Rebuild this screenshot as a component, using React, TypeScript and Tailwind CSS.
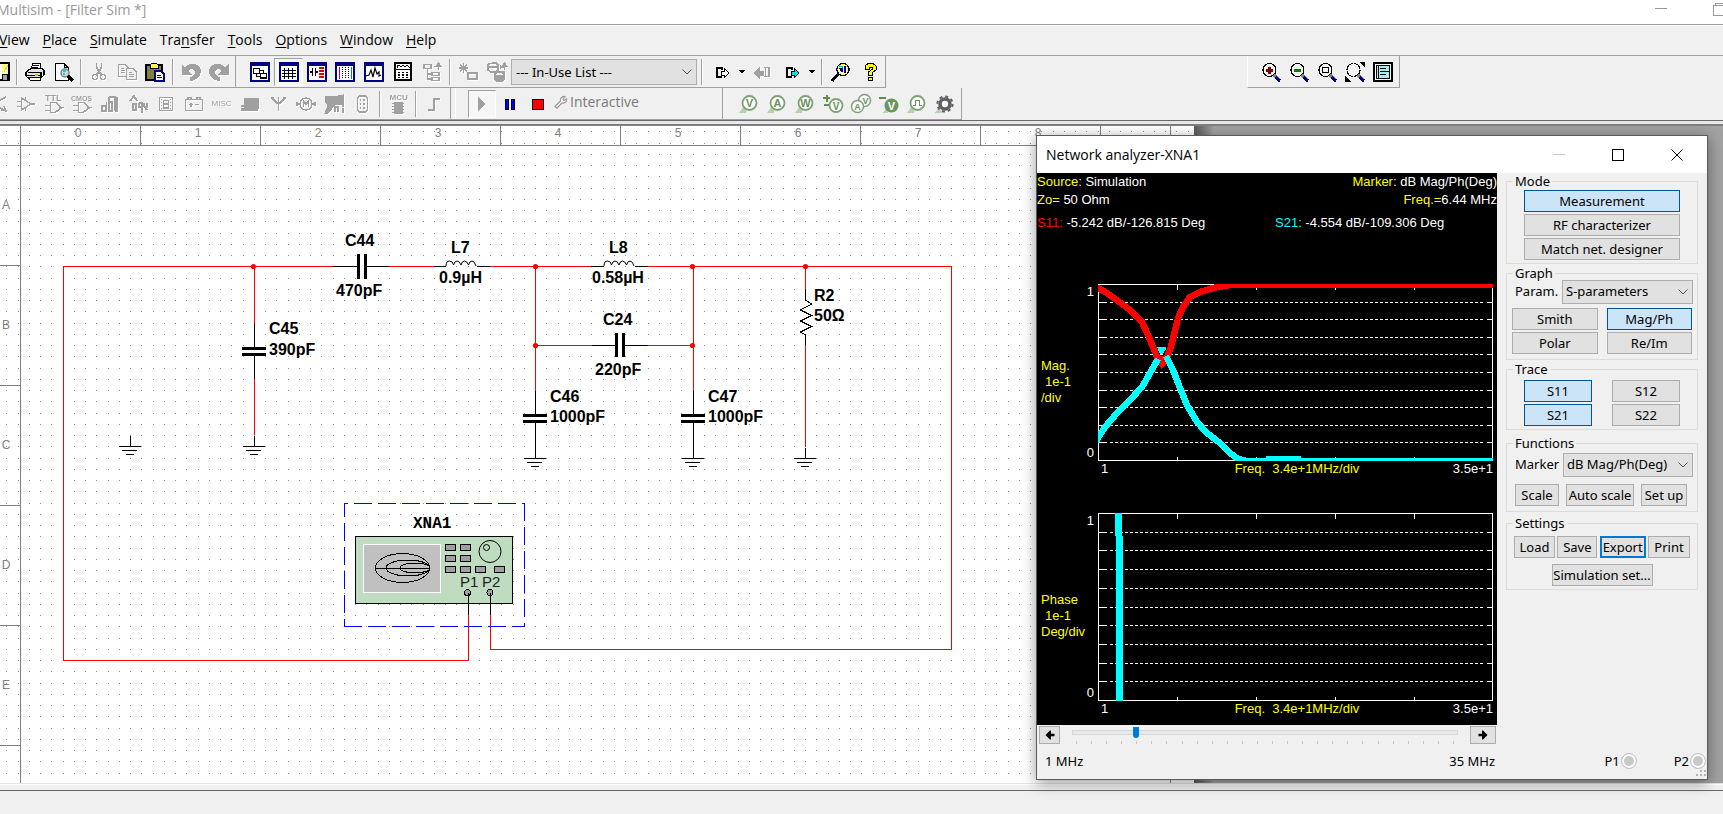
import type { ReactNode } from "react";

const G = "#a0a0a0";
const NAVY = "#000080";

/* ---------- toolbar primitives ---------- */

function Tool({
  label,
  wide,
  dim,
  pressed,
  children,
}: {
  label: string;
  wide?: boolean;
  dim?: boolean;
  pressed?: boolean;
  children: ReactNode;
}) {
  return (
    <button
      type="button"
      aria-label={label}
      className={
        "flex h-7 shrink-0 items-center justify-center border " +
        (wide ? "w-[29px] " : "w-7 ") +
        (pressed ? "border-t-[#a0a0a0] border-l-[#a0a0a0] border-r-white border-b-white bg-[#f7f7f7]" : "border-transparent")
      }
    >
      <svg
        viewBox="0 0 20 20"
        className={"h-5 w-5 shrink-0 overflow-visible " + (dim ? "drop-shadow-[1px_1px_0_#fff]" : "")}
        shapeRendering="crispEdges"
        fill="none"
        stroke={dim ? G : "#000"}
        strokeWidth="1"
        fontFamily="Liberation Sans, sans-serif"
      >
        {children}
      </svg>
    </button>
  );
}

function Sep() {
  return <span className="mx-[3px] h-[26px] w-[2px] shrink-0 border-r border-r-white bg-[#a0a0a0]" />;
}

function Caret({ label }: { label: string }) {
  return (
    <button type="button" aria-label={label} className="flex h-7 w-3 shrink-0 items-center justify-center">
      <svg viewBox="0 0 6 4" className="h-1 w-1.5" shapeRendering="crispEdges">
        <path d="M0 0H6L3 3.5Z" fill="#000" />
      </svg>
    </button>
  );
}

/* ---------- standard toolbar ---------- */

function StandardTools() {
  return (
    <div className="flex shrink-0 items-center border-r border-[#a0a0a0] pr-0.5">
      <div className="-ml-[15px] flex items-center">
        <Tool label="Save">
          <path d="M2 1H20V18H3Z" fill="#fff" stroke="#000" strokeWidth="2" />
          <path d="M13 2H19V11H13Z" fill="#ffff80" stroke="none" />
          <path d="M15 10L19 3" stroke="#c8c8a0" />
          <path d="M13 12H18V18H13Z" fill="#a0a0a0" />
        </Tool>
      </div>
      <Sep />
      <Tool label="Print">
        <path d="M6 7L8 1H16L15 7Z" fill="#fff" />
        <path d="M8 3.5H14M7 5.5H13" />
        <path d="M3 8.5L6 6.5H17L19 8.5V13L16 16H3L1 14V10Z" fill="#e4e4e4" strokeWidth="1.3" />
        <path d="M3 10.5H15M2 13.5H16M16 10V16" strokeWidth="1.3" />
        <path d="M4 15H15V18H5Z" fill="#fff" />
        <path d="M10 12.5H13" stroke="#cccc00" strokeWidth="2" />
      </Tool>
      <Tool label="Print preview">
        <path d="M2 1.5H11L15 5.5V18.5H2Z" fill="#fff" />
        <path d="M11 1.5V5.5H15" />
        <circle cx="12" cy="11" r="4" fill="#c8d8dc" stroke="#808080" strokeWidth="1.5" shapeRendering="auto" />
        <path d="M10 9H13M10 12H12" stroke="#00d8d8" strokeWidth="1.5" />
        <path d="M15 14L20 19" strokeWidth="3" />
      </Tool>
      <Sep />
      <Tool label="Cut" dim>
        <path d="M7.5 1V5L10 10L13 13M12.5 1V5L10 10L7 13" strokeWidth="1.5" />
        <circle cx="6" cy="15" r="2.5" strokeWidth="1.5" />
        <circle cx="14" cy="15" r="2.5" strokeWidth="1.5" />
      </Tool>
      <Tool label="Copy" dim>
        <path d="M1.5 2.5H8L11.5 6V14.5H1.5Z M3.5 6.5H7M3.5 8.5H8M3.5 10.5H8" strokeWidth="1.3" />
        <path d="M9.5 6.5H16L19.5 10V17.5H9.5Z M11.5 10.5H15M11.5 12.5H17M11.5 14.5H17" fill="#f0f0f0" strokeWidth="1.3" />
      </Tool>
      <Tool label="Paste">
        <path d="M1 3H17V18H1Z" fill="#808040" strokeWidth="1.5" />
        <path d="M5 3L7 1H11L13 3V6H5Z" fill="#ffff40" />
        <path d="M10 9H16L19 12V19H10Z" fill="#fff" stroke={NAVY} strokeWidth="1.5" />
        <path d="M12 13.5H16M12 15.5H17" stroke={NAVY} />
      </Tool>
      <Sep />
      <Tool label="Undo" dim>
        <path d="M1 3V12H10L7 9C9 5 14 6 14.5 10C14.5 13 12 15 9 16L10 18.5C15 18 19.5 14 19.5 9C19 2 9 0 4 6Z" fill={G} />
      </Tool>
      <Tool label="Redo" dim>
        <path d="M19 3V12H10L13 9C11 5 6 6 5.5 10C5.5 13 8 15 11 16L10 18.5C5 18 0.5 14 0.5 9C1 2 11 0 16 6Z" fill={G} />
      </Tool>
    </div>
  );
}

function PanelFrame({ children }: { children?: ReactNode }) {
  return (
    <>
      <path d="M1 1H19V19H1Z" fill="#fff" stroke={NAVY} strokeWidth="2" />
      <path d="M1 2.5H19" stroke={NAVY} strokeWidth="3" />
      {children}
    </>
  );
}

function ViewTools() {
  return (
    <div className="flex shrink-0 items-center border-r border-[#a0a0a0] pl-[9px] pr-px">
      <Tool label="Design toolbox" wide>
        <PanelFrame>
          <path d="M3.5 6.5H9.5V11.5H3.5ZM10.5 11.5H16.5V16H10.5ZM9.5 8.5H13.5V11.5M6.5 11.5V14.5H10.5" strokeWidth="1.4" />
        </PanelFrame>
      </Tool>
      <Tool label="Spreadsheet view" wide pressed>
        <PanelFrame>
          <path d="M3 8.5H17M3 11.5H17M3 14.5H17M5.5 6V17M9.5 6V17M13.5 6V17" strokeWidth="1.4" />
        </PanelFrame>
      </Tool>
      <Tool label="SPICE netlist viewer">
        <PanelFrame>
          <path d="M2.5 10H5.5M5.5 6V14M8.5 6V14M8.5 10H11" strokeWidth="1.4" />
          <path d="M12 5.5H17M12 8.5H17M12 11.5H17M12 14.5H17" stroke="#e00000" strokeWidth="2" />
        </PanelFrame>
      </Tool>
      <Tool label="Breadboard">
        <PanelFrame>
          <path d="M4.5 5V17" stroke="#e00000" />
          <path d="M16.5 5V17" stroke="#008080" />
          <path d="M7.5 5V17M10.5 5V17M13.5 5V17" strokeDasharray="1 1" />
        </PanelFrame>
      </Tool>
      <Tool label="Grapher" wide>
        <PanelFrame>
          <path d="M2 14L5 13L7 8L9 15L11 6L13 12L15 10V14L17 13" shapeRendering="auto" strokeWidth="1.2" />
        </PanelFrame>
      </Tool>
      <Tool label="Postprocessor" wide>
        <path d="M2 1H18V18H2Z" fill="#fff" strokeWidth="2" />
        <path d="M4 6V4L6 3L8 5L10 3L12 5L14 3L16 5V6" />
        <path d="M3 7.5H17" strokeWidth="1.5" />
        <path d="M4.5 10.5H16M4.5 13H16M4.5 15.5H16" strokeWidth="1.4" strokeDasharray="2 2" />
      </Tool>
      <Tool label="Parent sheet" wide dim>
        <path d="M2 2.5H9V6.5H2ZM10 10.5H17V13.5H10ZM10 15.5H17V18.5H10ZM5.5 7V17H10M5.5 12H10M12 4.5H16.5V8" strokeWidth="1.5" />
        <path d="M14 4L16.5 1L19 4Z" fill={G} />
      </Tool>
      <Sep />
      <Tool label="Component wizard" dim>
        <path d="M5.5 1V11M1 6H10M2 2.5L9 9.5M9 2.5L2 9.5" strokeWidth="1.5" />
        <path d="M10 11H19V17H10Z" strokeWidth="1.5" />
      </Tool>
      <Tool label="Database manager" wide dim>
        <path d="M2 2L6 1H9L11 3V8L9 10H4L1 8V3ZM1 5H11M9 10H18M8 12L10 10H15L17 12V17L15 19H10L8 17ZM8 14H17M13.5 3V7M13.5 5H17.5V8" strokeWidth="1.5" />
        <path d="M15 4L17.5 1L20 4Z" fill={G} />
        <path d="M9 15H16V18H10Z" fill={G} />
      </Tool>
      <div className="relative w-[186px] shrink-0">
        <select
          aria-label="In-use components"
          className="h-[26px] w-full appearance-none border border-[#adadad] bg-[#e1e1e1] pl-1 text-[13px] leading-5 text-black outline-none"
        >
          <option>--- In-Use List ---</option>
        </select>
        <Chevron />
      </div>
      <div className="flex pr-0.5 pl-px">
        <Sep />
      </div>
      <Tool label="Forward annotate">
        <path d="M4.5 5V15M4 5.5H9.5V8M4 14.5H10" strokeWidth="2" />
        <path d="M9 9H12V6L17 11L12 16V13H9Z" fill="#fff" />
      </Tool>
      <Caret label="Forward annotate options" />
      <Tool label="Back annotate" wide dim>
        <path d="M1 11L6 6V9H10V13H6V16Z" fill={G} />
        <path d="M11 5.5H16V14.5H11M12.5 5V15" strokeWidth="1.5" />
      </Tool>
      <Tool label="Transfer to layout" wide>
        <path d="M4.5 5V15M4 5.5H9.5V8M4 14.5H10" strokeWidth="2" />
        <path d="M9 9H12V6L17 11L12 16V13H9Z" fill="#00e5e5" />
      </Tool>
      <Caret label="Transfer options" />
      <Sep />
      <Tool label="Find examples" wide>
        <path d="M1 19L8 11" strokeWidth="3" />
        <circle cx="12" cy="7.5" r="6" fill="#fff" strokeWidth="1.5" />
        <circle cx="12" cy="7.5" r="5" stroke="#ffff00" strokeWidth="1" />
        <path d="M8 6H12V10H10ZM13 4H15V11H13Z" fill={NAVY} stroke="none" />
        <path d="M8 4L12 5" stroke="#00c8c8" strokeWidth="1.5" />
      </Tool>
      <Tool label="Help" wide>
        <path d="M5 7V4L8 1.5H13L16 4V8L12 11V13.5H8.5V10L12.5 7V5H9V7Z" fill="#ffff00" />
        <path d="M8.5 15.5H12V18.5H8.5Z" fill="#ffff00" />
      </Tool>
    </div>
  );
}

function Lens({ children, clip }: { children?: ReactNode; clip?: boolean }) {
  return (
    <>
      <circle cx="8.5" cy="8" r="6.5" fill="#f4f4f4" strokeWidth="1.2" strokeDasharray={clip ? "9 1" : undefined} />
      <path d="M13 13L18 18" stroke="#808080" strokeWidth="3" />
      <path d="M14.5 15L19 19" stroke={NAVY} strokeWidth="3" />
      {children}
    </>
  );
}

function ZoomTools() {
  return (
    <div className="flex shrink-0 items-center border border-t-0 border-[#a0a0a0] border-l-white pl-[9px] pr-0.5">
      <Tool label="Zoom in">
        <Lens>
          <path d="M5 8H12M8.5 4.5V11.5" stroke="#800000" strokeWidth="3" />
        </Lens>
      </Tool>
      <Tool label="Zoom out">
        <Lens>
          <path d="M5 8H12" stroke="#008000" strokeWidth="3" />
        </Lens>
      </Tool>
      <Tool label="Zoom area">
        <Lens>
          <path d="M5.5 5.5H11.5V10.5H5.5Z" />
        </Lens>
      </Tool>
      <Tool label="Zoom sheet">
        <Lens clip />
        <path d="M15.5 0.5H19.5V4.5Z M0.5 15V19H4.5Z" fill="#000" />
      </Tool>
      <Tool label="Full screen">
        <path d="M1 1H19V19H1Z" fill="#fff" strokeWidth="1.3" />
        <path d="M3.5 3.5H16.5V16.5H3.5Z" fill="#a8ecf0" />
        <path d="M5.5 4V16M7 6.5H13M7 9.5H16M7 12.5H13" />
      </Tool>
    </div>
  );
}

/* ---------- component and simulation toolbars ---------- */

function ComponentTools() {
  return (
    <div className="flex shrink-0 items-center border-r border-[#a0a0a0] pr-[2px]">
      <div className="-ml-4 flex">
        <Tool label="Place transistor" dim>
          <path d="M8 3V17M8 8L18 3M8 12L18 17M13 16L18 17L16 12" strokeWidth="1.5" />
        </Tool>
      </div>
      <Tool label="Place analog" dim>
        <path d="M5.5 4V16L15 10ZM1 7.5H5M1 12.5H5M15 10H19M9.5 3V7M9.5 13V17" strokeWidth="1.5" />
      </Tool>
      <Tool label="Place TTL" dim>
        <text x="1" y="7" fontSize="9" fontWeight="bold" fill={G} stroke="none">TTL</text>
        <path d="M1 11.5H6M1 16.5H6M6.5 8.5V18.5H11L17 14L12 8.5ZM17 13.5H20" strokeWidth="1.6" />
      </Tool>
      <Tool label="Place CMOS" dim>
        <text x="-1" y="7" fontSize="7" fontWeight="bold" fill={G} stroke="none">CMOS</text>
        <path d="M1 11.5H6M1 16.5H6M6.5 8.5V18.5H11L17 14L12 8.5ZM17 13.5H20" strokeWidth="1.6" />
      </Tool>
      <Tool label="Place misc digital" dim>
        <path d="M2 12H6V17H2ZM6.5 8V17M9 3H15V17M9 3V17H12V8H10M15 17H17V3" strokeWidth="1.8" />
      </Tool>
      <Tool label="Place mixed" dim>
        <path d="M2 7L6 2L9 7M5 10H8V16H5ZM11 9H14V19M11 9V13H14M16 9V12L19 16M19 9V14" strokeWidth="1.8" />
      </Tool>
      <Tool label="Place indicator" dim>
        <path d="M3.5 3.5H16.5V16.5H3.5ZM7.5 6.5H12.5V14H7.5ZM7.5 10H12.5" strokeWidth="1.5" />
        <path d="M5.5 5V16M14.5 5V16" strokeDasharray="1 2" />
      </Tool>
      <Tool label="Place power component" dim>
        <path d="M1.5 5.5H18.5V16.5H1.5ZM4 5V3.5H7V5M13 5V3.5H16V5M5 10.5H9M7 8.5V12.5M11 10.5H15" strokeWidth="1.5" />
      </Tool>
      <Tool label="Place misc" dim>
        <text x="-0.5" y="11.5" fontSize="8" fill={G} stroke="none">MISC</text>
      </Tool>
      <Tool label="Place advanced peripherals" dim>
        <path d="M4 4H18V14H4Z" fill={G} />
        <path d="M1 12H4M1 15.5H18" strokeWidth="2.5" />
      </Tool>
      <Tool label="Place RF" dim>
        <path d="M10.5 3V17M10 10L4 4M11 10L17 4M3 4H6M15 4H18" strokeWidth="1.5" />
      </Tool>
      <Tool label="Place electromechanical" dim>
        <circle cx="10" cy="10" r="6" strokeWidth="1.5" />
        <path d="M0 10H4M16 10H20M1 8V12M19 8V12M7.5 13V7.5L10 10L12.5 7.5V13" strokeWidth="1.5" />
      </Tool>
      <Tool label="Place NI component" dim>
        <path d="M1 2H6L8 3L14 2L19 1V10H12L9 13L4 19H1L4 11L1 7Z" fill={G} />
        <path d="M11 18V13H14V18M18.5 11V13M18.5 14V19" strokeWidth="2" />
      </Tool>
      <Tool label="Place connector" dim>
        <path d="M5.5 4L7.5 2H13L15.5 4V16L13 18H7.5L5.5 16Z" strokeWidth="1.5" />
        <path d="M8.5 5V16M12 5V16" strokeDasharray="2 2" strokeWidth="1.5" />
      </Tool>
      <Sep />
      <Tool label="Place MCU" dim>
        <text x="1.5" y="6" fontSize="8" fontWeight="bold" fill={G} stroke="none">MCU</text>
        <path d="M6 8H14V19H6Z" fill={G} />
        <path d="M4 9.5H16M4 12.5H16M4 15.5H16M4 18H16" />
      </Tool>
      <Sep />
      <Tool label="Place bus" dim>
        <path d="M4 16H10V5H16" strokeWidth="2" />
      </Tool>
    </div>
  );
}

function SimulationTools() {
  return (
    <div className="ml-1 flex w-[268px] shrink-0 items-center border-x border-[#a0a0a0] border-l-white pl-3">
      <Tool label="Run" pressed>
        <path d="M6 3V17L14 10Z" fill={G} stroke="none" />
      </Tool>
      <Tool label="Pause">
        <path d="M5.5 5.5H8.5V15H5.5ZM11.5 5.5H14.5V15H11.5Z" fill="#0000ff" />
      </Tool>
      <Tool label="Stop">
        <path d="M4.5 5.5H15V15.5H4.5Z" fill="#ff0000" />
      </Tool>
      <button type="button" className="ml-0.5 flex items-center gap-0.5 text-[14px] leading-5 text-[#7a7a7a]">
        <svg viewBox="0 0 14 14" className="-mt-1 h-[14px] w-[14px]" fill="none" stroke="#999" strokeWidth="1.2">
          <path d="M1 11.5L6.5 6C6 3.5 8 1 11 1.5L9 4L10 5.5L12.5 4C13 7 10.5 8.5 8 8L2.8 13.2Z" fill="#fff" />
        </svg>
        <span className="-mt-1">Interactive</span>
      </button>
    </div>
  );
}

const PROBE = "#7f9f74";

function Probe({ letter }: { letter: string }) {
  return (
    <>
      <path d="M0 19H7L8 14L4 13Z" fill="#b8d0b0" stroke="none" shapeRendering="auto" />
      <circle cx="10.5" cy="9" r="7" fill="#fff" stroke={PROBE} strokeWidth="1.8" shapeRendering="auto" />
      <text x="10.5" y="13" textAnchor="middle" fontSize="11" fontWeight="bold" fill="#6b8f60" stroke="none">{letter}</text>
    </>
  );
}

function ProbeTools() {
  return (
    <div className="flex shrink-0 items-center border-r border-[#a0a0a0] pl-3 pr-0.5">
      <Tool label="Voltage probe"><Probe letter="V" /></Tool>
      <Tool label="Current probe"><Probe letter="A" /></Tool>
      <Tool label="Power probe"><Probe letter="W" /></Tool>
      <Tool label="Differential probe">
        <path d="M0 4H7M3.5 0.5V7.5M1 11H7" stroke="#5f8a52" strokeWidth="2" />
        <circle cx="13" cy="11.5" r="6.5" fill="#fff" stroke={PROBE} strokeWidth="1.8" shapeRendering="auto" />
        <text x="13" y="15.5" textAnchor="middle" fontSize="10" fontWeight="bold" fill="#6b8f60" stroke="none">V</text>
      </Tool>
      <Tool label="Voltage and current probe">
        <circle cx="13.5" cy="6.5" r="6" fill="#fff" stroke={PROBE} strokeWidth="1.5" shapeRendering="auto" />
        <text x="14.5" y="9.5" textAnchor="middle" fontSize="9" fontWeight="bold" fill="#6b8f60" stroke="none">V</text>
        <circle cx="6.5" cy="12.5" r="6" fill="#fff" stroke={PROBE} strokeWidth="1.5" shapeRendering="auto" />
        <text x="6.5" y="16" textAnchor="middle" fontSize="9" fontWeight="bold" fill="#6b8f60" stroke="none">A</text>
      </Tool>
      <Tool label="Reference probe">
        <path d="M0 4H7" stroke="#5f8a52" strokeWidth="2" />
        <path d="M4 19H9L8 13Z" fill="#b8d0b0" stroke="none" />
        <circle cx="12.5" cy="11.5" r="7" fill="#6b9460" stroke="none" shapeRendering="auto" />
        <text x="12.5" y="15.5" textAnchor="middle" fontSize="11" fontWeight="bold" fill="#fff" stroke="none">V</text>
      </Tool>
      <Tool label="Digital probe">
        <Probe letter="" />
        <path d="M6 11.5H8.5V6.5H12.5V11.5H15" stroke="#6b8f60" strokeWidth="1.4" />
      </Tool>
      <Tool label="Probe settings">
        <path d="M0 19H7L4 13Z" fill="#b8d0b0" stroke="none" />
        <circle cx="10" cy="10" r="5" fill="#fff" stroke="#606060" strokeWidth="3.6" shapeRendering="auto" />
        <circle cx="10" cy="10" r="7.6" stroke="#606060" strokeWidth="2" strokeDasharray="3 2.97" shapeRendering="auto" />
      </Tool>
    </div>
  );
}

function Chevron() {
  return (
    <svg viewBox="0 0 10 6" className="pointer-events-none absolute top-1/2 right-[5px] -mt-[3px] h-1.5 w-2.5" fill="none" stroke="#505050">
      <path d="M0.5 0.5L5 5L9.5 0.5" />
    </svg>
  );
}

/* ---------- schematic ---------- */

function Ground({ x, y }: { x: number; y: number }) {
  return (
    <path
      d={`M${x} ${y - 11}V${y}M${x - 11.5} ${y}H${x + 10.5}M${x - 8.5} ${y + 4}H${x + 6.5}M${x - 4.5} ${y + 8}H${x + 3.5}`}
      stroke="#000"
    />
  );
}

function Coil({ x, y }: { x: number; y: number }) {
  return (
    <path
      d={`M${x} ${y}q0 -5 3.5 -5t4 4q1 -4 3.5 -4t4 4q1 -4 3.5 -4t4 4q1 -4 3.5 -4t4 5`}
      stroke="#000"
      shapeRendering="auto"
    />
  );
}

const partLabels: [number, number, string][] = [
  [345, 246, "C44"],
  [336, 296, "470pF"],
  [451, 253, "L7"],
  [439, 283, "0.9µH"],
  [269, 334, "C45"],
  [269, 355, "390pF"],
  [609, 253, "L8"],
  [592, 283, "0.58µH"],
  [603, 325, "C24"],
  [595, 375, "220pF"],
  [550, 402, "C46"],
  [550, 422, "1000pF"],
  [708, 402, "C47"],
  [708, 422, "1000pF"],
  [814, 301, "R2"],
  [814, 321, "50Ω"],
];

const junctions = [
  [253.5, 266.5],
  [535.5, 266.5],
  [692.5, 266.5],
  [805.5, 266.5],
  [535.5, 345.5],
  [692.5, 345.5],
];

const keypad = [
  [445, 544],
  [460, 544],
  [445, 555],
  [460, 555],
  [445, 566],
  [460, 566],
  [475, 566],
  [494, 566],
];

function Schematic() {
  return (
    <svg viewBox="0 126 1194 657" className="h-[657px] w-[1194px] shrink-0 bg-white" shapeRendering="crispEdges" fill="none">
      <defs>
        <pattern id="grid" x="-16" y="109" width="45" height="45" patternUnits="userSpaceOnUse">
          {[0, 11, 22, 34].map((y) => [0, 11, 22, 34].map((x) => <rect key={`${x}-${y}`} x={x} y={y} width="1" height="1" fill="#8c8c8c" />))}
        </pattern>
      </defs>
      <rect x="0" y="126" width="1194" height="657" fill="url(#grid)" />

      <g stroke="#808080">
        <path d="M20.5 126V783M0 145.5H1170.5M1170.5 126V783" />
        {[140, 260, 380, 500, 620, 740, 860, 980, 1100].map((x) => (
          <path key={x} d={`M${x + 0.5} 126V145`} />
        ))}
        {[265, 385, 505, 625, 745].map((y) => (
          <path key={y} d={`M0 ${y + 0.5}H20`} />
        ))}
      </g>
      <g fill="#808080" fontFamily="Liberation Sans, sans-serif" fontSize="12" textAnchor="middle">
        {[0, 1, 2, 3, 4, 5, 6, 7, 8].map((n) => (
          <text key={n} x={78 + n * 120} y="137">{n}</text>
        ))}
        {["A", "B", "C", "D", "E"].map((c, i) => (
          <text key={c} x="6" y={209 + i * 120}>{c}</text>
        ))}
      </g>

      <g stroke="#ff0000">
        <path d="M333 266.5H63.5V660.5H468.5V615" />
        <path d="M490.5 615V649.5H951.5V266.5H648M389 266.5H434M490 266.5H591" />
        <path d="M254.5 266V324M254.5 379V435M535.5 266V391M693.5 266V391M535 345.5H592M648 345.5H693M805.5 266V289M805.5 345V447" />
      </g>
      <g stroke="#000">
        <path d="M333 266.5H357M366 266.5H389M434 266.5H446M477 266.5H490M591 266.5H604M635 266.5H648" />
        <path d="M254.5 324V347M254.5 356V379M535.5 391V414M535.5 423V458M693.5 391V414M693.5 423V458" />
        <path d="M592 345.5H615M625 345.5H648M805.5 289V300M805.5 335V345" />
        <path d="M468.5 592V615M490.5 592V615" />
        <path d="M805.5 300L811.5 304L800.5 310L811.5 315.5L800.5 321L811.5 326.5L800.5 332L805.5 335" />
      </g>
      <path
        d="M357 254h3v25h-3zM364 254h3v25h-3zM615 333h3v24h-3zM622 333h3v24h-3zM242 347h24v3h-24zM242 353h24v3h-24zM523 414h24v3h-24zM523 420h24v3h-24zM681 414h24v3h-24zM681 420h24v3h-24z"
        fill="#000"
      />
      <Coil x={446} y={266} />
      <Coil x={604} y={266} />
      <Ground x={130.5} y={446.5} />
      <Ground x={254.5} y={446.5} />
      <Ground x={535.5} y={458.5} />
      <Ground x={693.5} y={458.5} />
      <Ground x={805.5} y={458.5} />
      {junctions.map(([x, y]) => (
        <circle key={`${x}-${y}`} cx={x} cy={y} r="2.6" fill="#ff0000" shapeRendering="auto" />
      ))}

      <g fill="#000" fontFamily="Liberation Sans, sans-serif" fontWeight="bold" fontSize="16">
        {partLabels.map(([x, y, t]) => (
          <text key={`${x}-${y}`} x={x} y={y}>{t}</text>
        ))}
      </g>
      <text x="413" y="528" fill="#000" fontFamily="Liberation Mono, monospace" fontWeight="bold" fontSize="16">XNA1</text>

      <rect x="355.5" y="536.5" width="157" height="67" fill="#c0dcc0" stroke="#000" />
      <rect x="363.5" y="544.5" width="77" height="48" fill="#c0c0c0" stroke="#fff" />
      <g stroke="#000">
        <ellipse cx="402.5" cy="568" rx="27" ry="14.5" />
        <ellipse cx="408" cy="568" rx="22" ry="8" />
        <ellipse cx="415" cy="568" rx="15" ry="5" />
        <path d="M375 568.5H430" />
        {keypad.map(([x, y]) => (
          <rect key={`${x}-${y}`} x={x + 0.5} y={y + 0.5} width="10" height="6" fill="#a0a0a4" />
        ))}
        <circle cx="490" cy="551.5" r="11" shapeRendering="auto" />
        <circle cx="486.5" cy="547.5" r="3" shapeRendering="auto" />
        <circle cx="467.5" cy="592.5" r="3" fill="#a0a0a4" />
        <circle cx="490" cy="592.5" r="3" fill="#a0a0a4" />
        <path d="M468.5 593V615M490.5 593V615" />
      </g>
      <g fill="#202020" fontFamily="Liberation Sans, sans-serif" fontSize="15">
        <text x="460" y="587">P1</text>
        <text x="482" y="587">P2</text>
      </g>
      <g stroke="#0000ff" strokeDasharray="18 6">
        <path d="M344 503.5H525" strokeDashoffset="14" />
        <path d="M344.5 503V627" strokeDashoffset="4" />
        <path d="M344 626.5H525" />
        <path d="M524.5 503V627" />
      </g>
    </svg>
  );
}

/* ---------- network analyzer ---------- */

function Frame({ height, children }: { height: number; children: ReactNode }) {
  const rows = [1, 2, 3, 4, 5, 6, 7, 8, 9].map((n) => Math.round(((height - 1) * n) / 10) + 0.5);
  const cols = [79.5, 158.5, 237.5, 316.5];
  return (
    <svg viewBox={`0 0 395 ${height}`} className="w-full overflow-hidden" shapeRendering="crispEdges" fill="none" stroke="#fff">
      <rect x="0.5" y="0.5" width="394" height={height - 1} />
      {rows.map((y) => (
        <g key={y}>
          <path d={`M0 ${y}H9M389 ${y}H395`} />
          <path d={`M12 ${y}H387`} strokeDasharray="3 2" />
        </g>
      ))}
      {cols.map((x) => (
        <path key={x} d={`M${x} 0V6M${x} ${height - 4}V${height}`} />
      ))}
      {children}
    </svg>
  );
}

function Chart({ height, unit, children }: { height: number; unit: [string, string, string]; children: ReactNode }) {
  return (
    <div className="grid grid-cols-[61px_1fr_4px]">
      <div className="flex justify-between pr-1 pl-1">
        <p className="self-center pt-[18px] text-[#ffff00]">
          {unit[0]}
          <br />
          <span className="pl-1">{unit[1]}</span>
          <br />
          {unit[2]}
        </p>
        <p className="-ml-2 flex flex-col justify-between">
          <span>1</span>
          <span>0</span>
        </p>
      </div>
      <Frame height={height}>{children}</Frame>
      <div className="col-start-2 flex justify-between pl-[3px]">
        <span className="w-12">1</span>
        <span className="whitespace-pre text-[#ffff00]">Freq.  3.4e+1MHz/div</span>
        <span className="w-12 text-right">3.5e+1</span>
      </div>
    </div>
  );
}

function Display() {
  return (
    <div className="h-[552px] bg-black font-['Liberation_Sans',sans-serif] text-[13px] leading-4 text-white">
      <div className="flex justify-between leading-[18px]">
        <span>
          <span className="text-[#ffff00]">Source:</span> Simulation
        </span>
        <span>
          <span className="text-[#ffff00]">Marker:</span> dB Mag/Ph(Deg)
        </span>
      </div>
      <div className="flex justify-between leading-[18px]">
        <span>
          <span className="text-[#ffff00]">Zo=</span> 50 Ohm
        </span>
        <span>
          <span className="text-[#ffff00]">Freq.=</span>6.44 MHz
        </span>
      </div>
      <div className="mt-[5px] mb-[52px] grid grid-cols-[238px_1fr] leading-[18px]">
        <span>
          <span className="text-[#ff0000]">S11:</span> -5.242 dB/-126.815 Deg
        </span>
        <span>
          <span className="text-[#00ffff]">S21:</span> -4.554 dB/-109.306 Deg
        </span>
      </div>
      <Chart height={177} unit={["Mag.", "1e-1", "/div"]}>
        <path
          d="M-2 3L9 9L20 17L32 26L44 38L50 51L55 63L60 75L64 80L68 76L72 66L76 51L80 34L85 23L92 13L102 8L115 4L132 1H395"
          stroke="#ff0000"
          strokeWidth="6.5"
        />
        <path d="M59 72L64 84L68 80V72Z" fill="#ff0000" stroke="none" />
        <path
          d="M-2 157L7 143L19 129L32 116L44 103L52 89L60 75M68 72L75 86L82 104L89 121L99 138L109 149L122 159L132 169L140 175L149 177H395"
          stroke="#00ffff"
          strokeWidth="6.5"
        />
        <path d="M168 172H203V174H322V177H168Z" fill="#00ffff" stroke="none" />
        <path d="M59 63H68V65L65 70H62Z" fill="#00ffff" stroke="none" />
      </Chart>
      <div className="h-9" />
      <Chart height={188} unit={["Phase", "1e-1", "Deg/div"]}>
        <path d="M17 0H24V23H25V188H18V23H17Z" fill="#00ffff" stroke="none" />
      </Chart>
    </div>
  );
}

function Arrow({ flip }: { flip?: boolean }) {
  return (
    <svg viewBox="0 0 10 10" className={"h-2.5 w-2.5 " + (flip ? "rotate-180" : "")}>
      <path d="M0.5 5L5 0.5H6V3.7H9.5V6.3H6V9.5H5Z" fill="#000" />
    </svg>
  );
}

function MarkerSlider() {
  return (
    <div className="pl-0.5 pt-px pr-px">
      <div className="flex items-start">
        <button type="button" aria-label="Marker left" className="flex h-[18px] w-[21px] items-center justify-center border border-[#adadad] bg-[#e1e1e1]">
          <Arrow />
        </button>
        <div className="mx-3 flex min-w-0 grow flex-col">
          <input
            type="range"
            aria-label="Marker frequency"
            min={1}
            max={35}
            step={0.01}
            defaultValue={6.44}
            className="h-[13px] w-full appearance-none bg-transparent [&::-webkit-slider-runnable-track]:h-[5px] [&::-webkit-slider-runnable-track]:border [&::-webkit-slider-runnable-track]:border-[#d6d6d6] [&::-webkit-slider-runnable-track]:bg-[#e7eaea] [&::-webkit-slider-thumb]:-mt-[4px] [&::-webkit-slider-thumb]:h-[11px] [&::-webkit-slider-thumb]:w-[6px] [&::-webkit-slider-thumb]:appearance-none [&::-webkit-slider-thumb]:rounded-b-sm [&::-webkit-slider-thumb]:bg-[#0078d7]"
          />
          <div className="mt-0.5 flex justify-between px-1">
            {Array.from({ length: 26 }, (_, i) => (
              <span key={i} className="h-[3px] w-px bg-[#c4c4c4]" />
            ))}
          </div>
        </div>
        <button type="button" aria-label="Marker right" className="flex h-[18px] w-[26px] items-center justify-center border border-[#adadad] bg-[#e1e1e1]">
          <Arrow flip />
        </button>
      </div>
      <div className="mt-[7px] flex justify-between pr-px pl-1.5 leading-5">
        <span>1 MHz</span>
        <span>35 MHz</span>
      </div>
    </div>
  );
}

function Btn({ children, on, focus, className = "" }: { children: ReactNode; on?: boolean; focus?: boolean; className?: string }) {
  return (
    <button
      type="button"
      className={
        "h-[22px] shrink-0 whitespace-nowrap text-center leading-5 " +
        (on ? "border border-[#005499] bg-[#cce4f7] " : focus ? "border-2 border-[#0078d7] bg-[#e1e1e1] " : "border border-[#adadad] bg-[#e1e1e1] ") +
        className
      }
    >
      {children}
    </button>
  );
}

function Group({ title, className = "", children }: { title: string; className?: string; children: ReactNode }) {
  return (
    <fieldset className={"min-w-0 border border-[#dcdcdc] pb-[3px] " + className}>
      <legend className="ml-1.5 px-0.5 leading-[13px]">{title}</legend>
      {children}
    </fieldset>
  );
}

function Controls() {
  return (
    <div className="flex w-[210px] shrink-0 flex-col pt-0.5 pr-[9px] pl-[9px]">
      <Group title="Mode">
        <div className="flex flex-col gap-0.5 px-[17px] pt-0.5">
          <Btn on>Measurement</Btn>
          <Btn>RF characterizer</Btn>
          <Btn>Match net. designer</Btn>
        </div>
      </Group>
      <Group title="Graph" className="mt-[3px] pb-[5px]">
        <div className="flex items-center justify-between pr-1 pl-2">
          <label htmlFor="param">Param.</label>
          <div className="relative w-[131px]">
            <select id="param" className="h-6 w-full appearance-none border border-[#adadad] bg-[#e1e1e1] pl-[3px] outline-none">
              <option>S-parameters</option>
            </select>
            <Chevron />
          </div>
        </div>
        <div className="mt-1 grid grid-cols-2 gap-x-[9px] gap-y-0.5 px-[5px]">
          <Btn>Smith</Btn>
          <Btn on>Mag/Ph</Btn>
          <Btn>Polar</Btn>
          <Btn>Re/Im</Btn>
        </div>
      </Group>
      <Group title="Trace" className="mt-[3px]">
        <div className="grid grid-cols-2 gap-x-5 gap-y-0.5 px-[17px] pt-1">
          <Btn on>S11</Btn>
          <Btn>S12</Btn>
          <Btn on>S21</Btn>
          <Btn>S22</Btn>
        </div>
      </Group>
      <Group title="Functions" className="mt-[7px] pb-[5px]">
        <div className="flex items-center justify-between pt-[3px] pr-1 pl-2">
          <label htmlFor="marker">Marker</label>
          <div className="relative w-[130px]">
            <select id="marker" className="h-6 w-full appearance-none border border-[#adadad] bg-[#e1e1e1] pl-[3px] outline-none">
              <option>dB Mag/Ph(Deg)</option>
            </select>
            <Chevron />
          </div>
        </div>
        <div className="mt-[7px] flex justify-between pr-2.5 pl-2">
          <Btn className="w-11">Scale</Btn>
          <Btn className="w-[68px]">Auto scale</Btn>
          <Btn className="w-[46px]">Set up</Btn>
        </div>
      </Group>
      <Group title="Settings" className="mt-[5px]">
        <div className="flex justify-between pt-1.5 pr-[7px] pl-[7px]">
          <Btn className="w-[41px]">Load</Btn>
          <Btn className="w-10">Save</Btn>
          <Btn focus className="w-[46px] leading-[18px]">Export</Btn>
          <Btn className="w-[42px]">Print</Btn>
        </div>
        <div className="mt-1.5 flex justify-center">
          <Btn className="w-[101px]">Simulation set...</Btn>
        </div>
      </Group>
      <div className="mt-auto mb-[10px] -mr-2 flex items-center justify-end gap-x-[37px]">
        {["P1", "P2"].map((p) => (
          <label key={p} className="flex items-center gap-px leading-4">
            {p}
            <input type="radio" disabled className="h-4 w-4 appearance-none rounded-full border border-[#c4c4c4] bg-[#c8c8c8] shadow-[inset_0_0_0_2px_#fff]" />
          </label>
        ))}
      </div>
    </div>
  );
}

function AnalyzerWindow() {
  return (
    <section
      aria-label="Network analyzer"
      className="absolute top-[9px] left-[1036px] z-10 flex h-[645px] w-[672px] flex-col border border-[#5a5a5a] bg-[#f0f0f0] font-['Noto_Sans',sans-serif] text-[13px] text-black shadow-[0_3px_14px_rgba(0,0,0,0.4)]"
    >
      <header className="flex h-[37px] shrink-0 items-center justify-between bg-white pl-[9px]">
        <h1 className="font-['Open_Sans',sans-serif] text-[14px]">Network analyzer-XNA1</h1>
        <div className="flex items-center gap-[47px] pr-6">
          <button type="button" aria-label="Minimize" disabled className="h-px w-3 bg-[#c8c8c8]" />
          <button type="button" aria-label="Maximize" className="h-3 w-3 border border-black" />
          <button type="button" aria-label="Close" className="h-3 w-3">
            <svg viewBox="0 0 12 12" className="h-3 w-3" stroke="#000">
              <path d="M0.5 0.5L11.5 11.5M11.5 0.5L0.5 11.5" />
            </svg>
          </button>
        </div>
      </header>
      <div className="flex min-h-0 grow">
        <div className="min-w-0 grow">
          <Display />
          <MarkerSlider />
        </div>
        <Controls />
      </div>
      <svg viewBox="0 0 12 8" className="absolute right-0 bottom-px h-2 w-3" fill="#b4b4b4">
        <path d="M5 0h2v2h-2zM9 0h2v2h-2zM1 4h2v2h-2zM5 4h2v2h-2zM9 4h2v2h-2z" />
      </svg>
    </section>
  );
}

/* ---------- application shell ---------- */

const menus: [string, string, string][] = [
  ["", "V", "iew"],
  ["", "P", "lace"],
  ["", "S", "imulate"],
  ["Tra", "n", "sfer"],
  ["", "T", "ools"],
  ["", "O", "ptions"],
  ["", "W", "indow"],
  ["", "H", "elp"],
];

export default function App() {
  return (
    <div className="flex h-screen flex-col overflow-hidden bg-[#f0f0f0] font-['Open_Sans',sans-serif] text-[14px] text-black">
      <header className="flex h-6 shrink-0 justify-between bg-white text-[#999]">
        <span className="-ml-[3px] pt-px leading-[18px] whitespace-nowrap">Multisim - [Filter Sim *]</span>
        <div className="-mr-1 flex gap-[46px] pt-[3px]">
          <button type="button" aria-label="Minimize" className="mt-[5px] h-px w-3 bg-[#999]" />
          <button type="button" aria-label="Restore" className="h-[13px] w-[14px]">
            <svg viewBox="0 0 14 13" className="h-[13px] w-[14px]" fill="none" stroke="#999" shapeRendering="crispEdges">
              <path d="M0.5 2.5H10.5V12.5H0.5ZM2.5 2V0.5H13.5V10.5H11" />
            </svg>
          </button>
        </div>
      </header>
      <nav className="flex h-8 shrink-0 items-center gap-[13px] border-y border-[#a0a0a0] shadow-[inset_0_1px_0_#fff]">
        {menus.map(([a, b, c], i) => (
          <button type="button" key={b} className={"leading-5 whitespace-nowrap " + (i === 0 ? "-ml-px" : "")}>
            {a}
            <u className="underline-offset-2">{b}</u>
            {c}
          </button>
        ))}
      </nav>
      <div className="flex h-8 shrink-0">
        <div className="flex border-b border-[#a0a0a0] font-['Noto_Sans',sans-serif]">
          <StandardTools />
          <ViewTools />
        </div>
        <div className="ml-auto flex pr-[323px]">
          <ZoomTools />
        </div>
      </div>
      <div className="flex h-8 shrink-0">
        <div className="flex border-b border-[#a0a0a0]">
          <ComponentTools />
          <SimulationTools />
          <ProbeTools />
        </div>
      </div>
      <div className="h-[6px] shrink-0 border-t border-b-2 border-t-[#696969] border-b-[#808080] bg-[#e8e8e8]" />
      <main className="relative flex min-h-0 grow bg-[#a2a2a2]">
        <div className="flex min-w-0 grow overflow-hidden">
          <Schematic />
          <div className="w-5 shrink-0 bg-linear-to-r from-[#585858] to-[#a2a2a2]" />
        </div>
        <AnalyzerWindow />
      </main>
      <footer className="h-[31px] shrink-0 border-t border-[#e3e3e3]">
        <div className="h-[7px] border-t border-b border-t-white border-b-[#696969]" />
      </footer>
    </div>
  );
}
